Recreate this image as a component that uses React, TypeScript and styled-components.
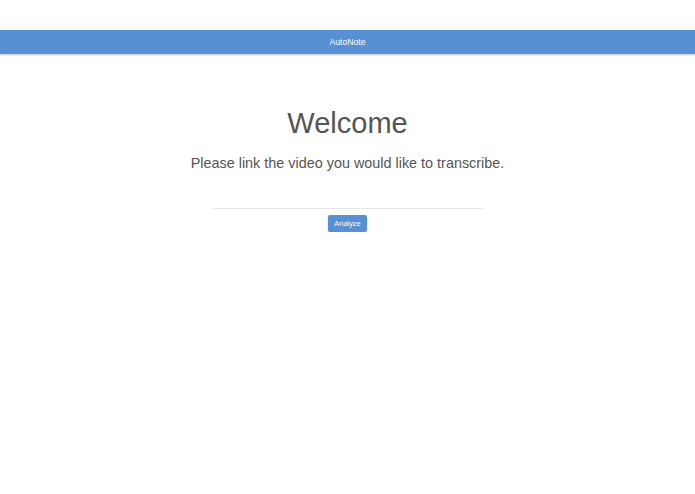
import styled, { createGlobalStyle } from "styled-components";

const GlobalStyle = createGlobalStyle`
  html, body {
    margin: 0;
    padding: 0;
    background: #ffffff;
    font-family: "Liberation Sans", Arial, sans-serif;
  }
`;

const Page = styled.div`
  padding-top: 30px;
`;

const NavBar = styled.header`
  height: 24px;
  background: #5790d3;
  box-shadow: 0 1px 2px rgba(0, 0, 0, 0.25);
  display: flex;
  align-items: center;
  justify-content: center;
  color: #ffffff;
  font-size: 8.6px;
`;

const Main = styled.main`
  display: flex;
  flex-direction: column;
  align-items: center;
  padding-top: 51px;
  color: #555555;
`;

const Title = styled.h1`
  margin: 0;
  font-size: 29px;
  font-weight: 400;
  line-height: 36px;
`;

const Subtitle = styled.p`
  margin: 13px 0 0;
  font-size: 14.4px;
  line-height: 18px;
`;

const LinkInput = styled.input`
  margin-top: 22px;
  width: 270px;
  height: 14px;
  border: none;
  border-bottom: 1px solid #e6e6e6;
  outline: none;
  background: transparent;
  font-family: inherit;
  font-size: 9px;
  padding: 0;
`;

const Button = styled.button`
  margin-top: 6px;
  height: 17px;
  padding: 0 6px;
  border: none;
  border-radius: 2px;
  background: #5790d3;
  color: #ffffff;
  font-family: inherit;
  font-size: 7.4px;
  box-shadow: 0 1px 2px rgba(0, 0, 0, 0.2);
  cursor: pointer;
`;

export default function App() {
  return (
    <Page>
      <GlobalStyle />
      <NavBar>AutoNote</NavBar>
      <Main>
        <Title>Welcome</Title>
        <Subtitle>Please link the video you would like to transcribe.</Subtitle>
        <LinkInput type="text" />
        <Button>Analyze</Button>
      </Main>
    </Page>
  );
}
